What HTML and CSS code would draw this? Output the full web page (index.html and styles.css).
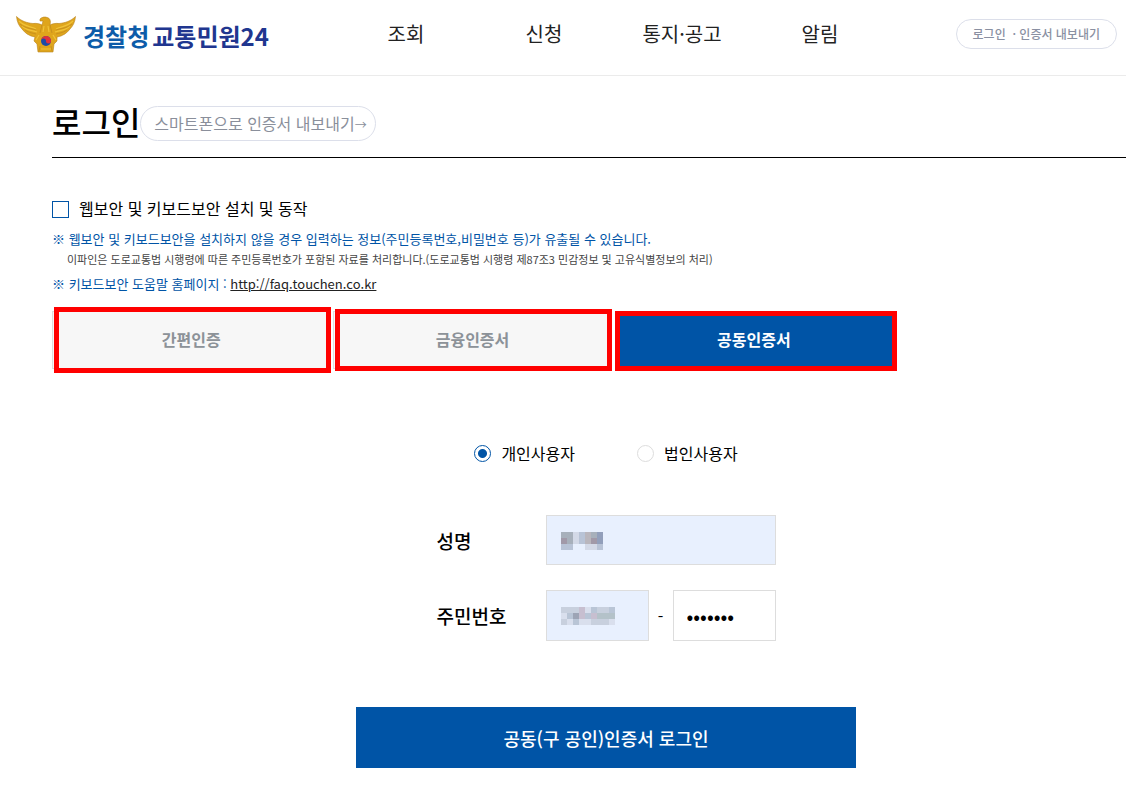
FILE: index.html
```
<!DOCTYPE html>
<html lang="ko">
<head>
  <meta charset="UTF-8" />
  <meta name="viewport" content="width=device-width, initial-scale=1.0" />
  <title>로그인 | 경찰청 교통민원24</title>
  <link rel="stylesheet" href="styles.css">
</head>
<body>
  <header class="header">
    <a href="#" class="logo">
      <svg class="emblem" viewBox="0 0 60 37" aria-hidden="true">
        <path fill="#dfa51c" stroke="#b8831f" stroke-width="0.6" d="M0.5 0.5 C5 5 11 7 17 7.5 C21 7 24 8 26 9 L27 5 L24 5 L24 3 C26 1 29 0.5 31 1.5 C34 2 35 5 34 9 C36 8 39 7 43 7.5 C49 7 55 5 59.5 0.5 C59 6 57 10 54 13 C51 17 47 20 41 21 L41 25 L38 28 L37 36 L22 36 L21 28 L18 25 L19 21 C13 20 9 17 6 13 C3 10 1 6 0.5 0.5Z"/>
        <path fill="none" stroke="#f0c238" stroke-width="1.2" d="M3 5 C9 11 14 10 20 13 M6 10 C11 15 16 14 21 16 M57 5 C51 11 46 10 40 13 M54 10 C49 15 44 14 39 16 M28 10 L27 16 M32 10 L33 16 M25 33 L35 33 M23 19 L20 24 M37 19 L40 24"/>
        <path fill="none" stroke="#b8831f" stroke-width="0.6" d="M4 8 C10 13 15 12 20 14 M9 14 C13 17 17 17 20 18 M56 8 C50 13 45 12 40 14 M51 14 C47 17 43 17 40 18 M26 9 L24 17 M34 9 L36 17 M24 30 L23 35 M35 30 L36 35"/>
        <circle cx="30" cy="25" r="5" fill="#1d4ba5"/>
        <path fill="#e0303c" d="M25 25 A5 5 0 0 1 35 25 A2.5 2.5 0 0 1 30 25 A2.5 2.5 0 0 0 25 25Z"/>
      </svg>
      <span class="logo-text"><span class="logo-police">경찰청</span><span class="logo-minwon">교통민원24</span></span>
    </a>
    <nav class="nav">
      <a href="#">조회</a>
      <a href="#">신청</a>
      <a href="#">통지·공고</a>
      <a href="#">알림</a>
    </nav>
    <a href="#" class="top-login">로그인 &nbsp;· 인증서 내보내기</a>
  </header>

  <main class="main">
    <div class="title-row">
      <h1>로그인</h1>
      <button type="button" class="export-btn">스마트폰으로 인증서 내보내기<span class="arrow">→</span></button>
    </div>

    <div class="security">
      <input type="checkbox" id="security_check" />
      <label for="security_check">웹보안 및 키보드보안 설치 및 동작</label>
    </div>
    <div class="notice">
      <p>※ 웹보안 및 키보드보안을 설치하지 않을 경우 입력하는 정보(주민등록번호,비밀번호 등)가 유출될 수 있습니다.</p>
      <p class="notice-sub">이파인은 도로교통법 시행령에 따른 주민등록번호가 포함된 자료를 처리합니다.(도로교통법 시행령 제87조3 민감정보 및 고유식별정보의 처리)</p>
      <p>※ 키보드보안 도움말 홈페이지 : <a href="http://faq.touchen.co.kr">http://faq.touchen.co.kr</a></p>
    </div>

    <div class="tabs">
      <button type="button" class="tab tab-simple">간편인증</button>
      <button type="button" class="tab tab-finance">금융인증서</button>
      <button type="button" class="tab tab-joint active">공동인증서</button>
    </div>

    <form class="login-form">
      <div class="user-type">
        <label for="user_personal"><input type="radio" name="user_type" id="user_personal" checked />개인사용자</label>
        <label for="user_corp"><input type="radio" name="user_type" id="user_corp" />법인사용자</label>
      </div>

      <div class="fields">
        <label for="user_name">성명</label>
        <div class="field">
          <input type="text" id="user_name" class="filled" />
          <svg class="mask" width="42" height="18" viewBox="0 0 7 3" shape-rendering="crispEdges" aria-hidden="true">
            <path fill="#a7b0bb" d="M0 0h2v1h-2z M1 1h1v1h-1z M5 0h1v1h-1z"/>
            <path fill="#a199a8" d="M0 1h1v1h-1z M5 1h1v1h-1z"/>
            <path fill="#b8c3d6" d="M0 2h2v1h-2z M3 0h1v2h-1z M6 2h1v1h-1z"/>
            <path fill="#d3d9e7" d="M2 0h1v2h-1z M4 2h2v1h-2z"/>
            <path fill="#b9b6bd" d="M4 0h1v2h-1z"/>
            <path fill="#929fbb" d="M6 0h1v2h-1z"/>
          </svg>
        </div>
        <label for="jumin_front">주민번호</label>
        <div class="jumin">
          <div class="field">
            <input type="text" id="jumin_front" class="filled" />
            <svg class="mask" width="54" height="18" viewBox="0 0 9 3" shape-rendering="crispEdges" aria-hidden="true">
              <path fill="#c8d0de" d="M0 0h9v3h-9z"/>
              <path fill="#b9c5d6" d="M1 1h1v1h-1z M4 1h1v1h-1z M8 0h1v1h-1z M2 2h1v1h-1z M5 0h1v1h-1z"/>
              <path fill="#b4c2c9" d="M6 1h3v1h-3z"/>
              <path fill="#9da4b5" d="M2 1h1v1h-1z"/>
              <path fill="#c7bfd0" d="M3 0h1v2h-1z M5 1h1v1h-1z"/>
              <path fill="#d9dfed" d="M1 2h1v1h-1z M3 2h2v1h-2z M0 1h1v1h-1z M4 0h1v1h-1z M8 2h1v1h-1z"/>
            </svg>
          </div>
          <span>-</span>
          <input type="password" id="jumin_back" value="0000000" aria-label="주민번호 뒷자리" />
        </div>
      </div>

      <button type="submit" class="login-btn">공동(구 공인)인증서 로그인</button>
    </form>
  </main>
</body>
</html>
```
FILE: styles.css
```
* {
  box-sizing: border-box;
}
body {
  margin: 0;
  font-family: "Noto Sans CJK KR", sans-serif;
  font-size: 16px;
  color: #000;
  background: #fff;
}
a {
  color: inherit;
  text-decoration: none;
}
input,
button {
  font-family: inherit;
}
button {
  cursor: pointer;
}

/* header */
.header {
  display: flex;
  align-items: flex-start;
  height: 76px;
  padding: 0 9px 0 16px;
  border-bottom: 1px solid #ebebeb;
}
.logo {
  display: flex;
  width: 321px;
  padding-top: 16px;
}
.emblem {
  width: 60px;
  height: 37px;
  margin-right: 7px;
}
.logo-text {
  display: flex;
  gap: 3px;
  padding-top: 2px;
  font-size: 24px;
  font-weight: bold;
  line-height: 36px;
}
.logo-police {
  color: #0d5ca9;
}
.logo-minwon {
  color: #20368f;
}
.nav {
  display: grid;
  grid-template-columns: repeat(4, 138px);
  padding-top: 18px;
  font-size: 20px;
  line-height: 32px;
  color: #222;
  text-align: center;
}
.top-login {
  margin: 19px 0 0 auto;
  padding: 0 16px;
  border: 1px solid #dcdfea;
  border-radius: 15px;
  font-size: 12px;
  font-weight: 500;
  line-height: 28px;
  color: #8a90a2;
}

/* title */
.main {
  padding: 22px 0 36px 52px;
}
.title-row {
  display: flex;
  align-items: center;
  height: 60px;
  padding-bottom: 8px;
  border-bottom: 1px solid #000;
}
h1 {
  margin: 0;
  padding-bottom: 6px;
  font-size: 32px;
  font-weight: 500;
  line-height: 42px;
}
.export-btn {
  height: 35px;
  padding: 0 8px 2px 13px;
  border: 1px solid #dcdfea;
  border-radius: 18px;
  background: #fff;
  font-size: 16px;
  color: #8a8f9b;
}
.arrow {
  font-size: 12px;
}

/* security notice */
.security {
  display: flex;
  align-items: center;
  gap: 10px;
  margin-top: 38px;
  line-height: 26px;
}
.security input {
  appearance: none;
  width: 17px;
  height: 17px;
  margin: 0;
  border: 1px solid #0054a6;
  background: #fff;
}
.security input:checked {
  background: #0054a6;
}
.security label {
  padding-bottom: 2px;
  line-height: 24px;
}
.notice {
  margin-top: 7px;
  font-size: 13px;
  line-height: 20px;
  color: #0054a6;
}
.notice p {
  margin: 0 0 5px;
}
.notice .notice-sub {
  padding-left: 15px;
  margin-top: -5px;
  font-size: 11px;
  color: #444;
}
.notice a {
  color: #222;
  text-decoration: underline;
}

/* tabs */
.tabs {
  display: grid;
  grid-template-columns: repeat(3, 1fr);
  gap: 3px;
  max-width: 841px;
  margin-top: 17px;
}
.tab {
  position: relative;
  height: 58px;
  padding-bottom: 4px;
  border: 1px solid #ddd;
  background: #f7f7f7;
  font-size: 16px;
  font-weight: bold;
  color: #8c9298;
}
.tab.active {
  border-color: #0054a6;
  background: #0054a6;
  color: #fff;
}
.tab::after {
  content: "";
  position: absolute;
  border: 5px solid #f00;
}
.tab-simple::after {
  inset: -5px -2px -5px 1px;
}
.tab-finance::after {
  inset: -3px -1px -3px 1px;
}
.tab-joint::after {
  inset: -1px -5px -3px -1px;
}

/* login form */
.login-form {
  display: flex;
  flex-direction: column;
  align-items: center;
  padding: 71px 0 0 34px;
}
.user-type {
  display: flex;
  gap: 62px;
  line-height: 26px;
}
.user-type label {
  display: flex;
  align-items: center;
  gap: 10px;
}
.user-type input {
  appearance: none;
  width: 17px;
  height: 17px;
  margin: 0;
  border: 1px solid #ddd;
  border-radius: 50%;
}
.user-type input:checked {
  border-color: #0054a6;
  background: radial-gradient(circle, #0054a6 4px, #fff 5px);
}
.fields {
  display: grid;
  grid-template-columns: 109px 230px;
  row-gap: 25px;
  align-items: center;
  margin-top: 49px;
}
.fields label {
  font-size: 19px;
  font-weight: 500;
}
.field {
  position: relative;
}
.fields input {
  display: block;
  width: 100%;
  height: 50px;
  padding: 0 13px;
  border: 1px solid #ddd;
  background: #fff;
  font-size: 16px;
}
.fields input.filled {
  background: #e8f0fe;
}
.mask {
  position: absolute;
  top: 17px;
  left: 15px;
}
.jumin {
  display: grid;
  grid-template-columns: 1fr 24px 1fr;
  align-items: center;
  text-align: center;
}
.fields .jumin input {
  height: 51px;
}
.fields .jumin input[type="password"] {
  font-size: 20px;
}
.login-btn {
  width: 500px;
  max-width: 100%;
  height: 61px;
  margin-top: 66px;
  border: none;
  background: #0054a6;
  font-size: 18px;
  font-weight: 500;
  color: #fff;
}
```
